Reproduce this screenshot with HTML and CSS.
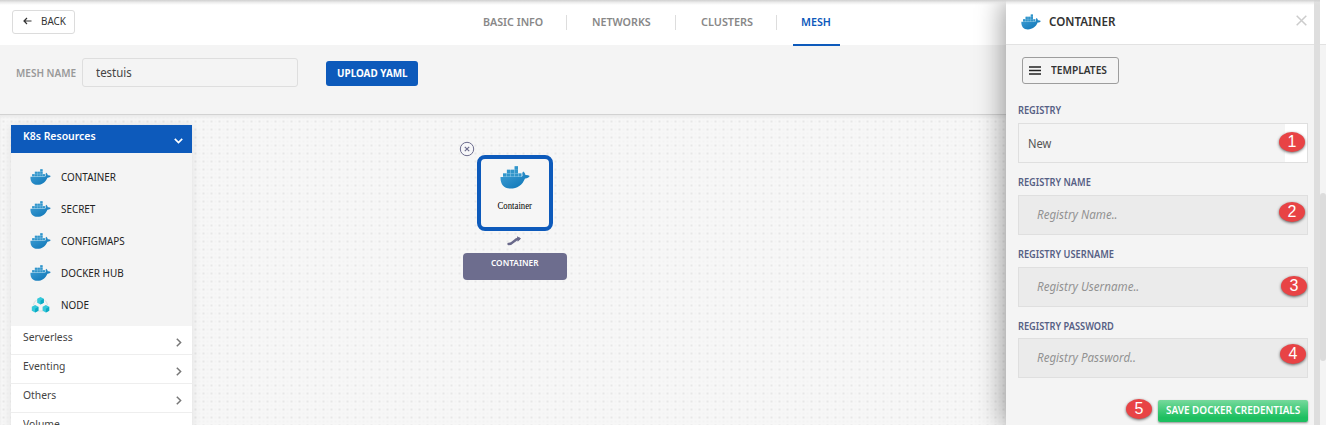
FILE: index.html
```
<!DOCTYPE html>
<html lang="en">
<head>
<meta charset="utf-8">
<title>Mesh</title>
<link rel="stylesheet" href="styles.css">
</head>
<body>
<svg class="defs" width="0" height="0">
  <defs>
    <linearGradient id="sea" x1="0" y1="0" x2="1" y2="1"><stop offset="0" stop-color="#42a0d5"/><stop offset="1" stop-color="#0871b4"/></linearGradient>
    <symbol id="whale" viewBox="0 0 30 23">
      <path fill="url(#sea)" d="M.5 11H20.5C22.3 11 22.8 9.8 22.3 8.2C22.1 7.2 22.5 6.3 23.2 5.5C24.7 6.5 25.3 7.8 25.4 9C27 8.8 28.6 9.2 29.7 10C28.9 11.7 27 12.5 25 12.4C22.3 19 17.2 22.6 10.4 22.6C3.7 22.6.3 18.2.5 11Z"/>
      <path fill="#8cc6e6" d="M3 7.2h18.500V11H3zM6.900 3.800H18v4H6.900zM14.500.300H18v4h-3.500z"/>
      <path fill="#3295ca" d="M3 7.4h3.3v3.2H3zM6.9 7.4h3.3v3.2H6.9zM10.8 7.4h3.3v3.2h-3.3zM14.7 7.4H18v3.2h-3.3zM18.6 7.4h2.8v3.2h-2.8zM6.9 3.8h3.3V7H6.9zM10.8 3.8h3.3V7h-3.3zM14.7 3.8H18V7h-3.3zM14.7.3H18v3.1h-3.3z"/>
    </symbol>
    <symbol id="cubes" viewBox="0 0 18 16">
      <path fill="none" stroke="#d5d5d5" stroke-width=".8" d="M5 3a7 7 0 0 0-3 5M13 3a7 7 0 0 1 3 5M6 14h6"/>
      <path fill="#35c8da" d="M9 0l3.300 1.800v3.900L9 7.500 5.700 5.700V1.800zM3.600 8l3.300 1.800v3.900l-3.300 1.800-3.300-1.800V9.800zM14.400 8l3.300 1.800v3.900l-3.300 1.800-3.300-1.800V9.800z"/>
      <path fill="#0ba9c2" d="M9 3.700l3.300-1.900v3.900L9 7.500zM3.600 11.700l3.300-1.900v3.900l-3.300 1.800zM14.400 11.700l3.300-1.900v3.900l-3.300 1.800z"/>
    </symbol>
  </defs>
</svg>

<div class="app">
  <header class="topbar">
    <button class="back"><svg width="9" height="8" viewBox="0 0 9 8"><path d="M8.500 4H1M4 1L1 4l3 3" fill="none" stroke="#333" stroke-width="1.200"/></svg><span class="tx">BACK</span></button>
    <nav class="tabs">
      <a class="tab tab-basic"><span class="tx">BASIC INFO</span></a>
      <a class="tab tab-net"><span class="tx">NETWORKS</span></a>
      <a class="tab tab-clu"><span class="tx">CLUSTERS</span></a>
      <a class="tab tab-mesh active"><span class="tx">MESH</span></a>
    </nav>
  </header>
  <section class="toolbar">
    <label class="mesh-label"><span class="tx">MESH NAME</span></label>
    <div class="mesh-input"><span class="tx">testuis</span></div>
    <button class="upload"><span class="tx">UPLOAD YAML</span></button>
  </section>
  <main class="canvas">
    <aside class="sidebar">
      <div class="group-head"><span class="tx">K8s Resources</span><svg width="9" height="6" viewBox="0 0 9 6"><path d="M.8.8l3.700 3.700L8.200.8" fill="none" stroke="#fff" stroke-width="1.700"/></svg></div>
      <ul class="items">
        <li><svg class="ico"><use href="#whale"/></svg><span class="tx">CONTAINER</span></li>
        <li><svg class="ico"><use href="#whale"/></svg><span class="tx">SECRET</span></li>
        <li><svg class="ico"><use href="#whale"/></svg><span class="tx">CONFIGMAPS</span></li>
        <li><svg class="ico"><use href="#whale"/></svg><span class="tx">DOCKER HUB</span></li>
        <li><svg class="ico"><use href="#cubes"/></svg><span class="tx">NODE</span></li>
      </ul>
      <div class="group"><span class="tx">Serverless</span><svg width="6" height="9" viewBox="0 0 6 9"><path d="M.8.8l3.800 3.700L.8 8.200" fill="none" stroke="#777" stroke-width="1.500"/></svg></div>
      <div class="group"><span class="tx">Eventing</span><svg width="6" height="9" viewBox="0 0 6 9"><path d="M.8.8l3.800 3.700L.8 8.200" fill="none" stroke="#777" stroke-width="1.500"/></svg></div>
      <div class="group"><span class="tx">Others</span><svg width="6" height="9" viewBox="0 0 6 9"><path d="M.8.8l3.800 3.700L.8 8.200" fill="none" stroke="#777" stroke-width="1.500"/></svg></div>
      <div class="group"><span class="tx">Volume</span></div>
    </aside>
    <svg class="node-close" width="16" height="16" viewBox="0 0 16 16"><circle cx="8" cy="8" r="6.700" fill="#f7f7f9" stroke="#6d6d8e"/><path d="M5.800 5.800l4.400 4.400M10.200 5.800l-4.400 4.400" stroke="#6d6d8e" stroke-width="1.200"/></svg>
    <div class="node"><svg class="node-ico"><use href="#whale"/></svg><span class="node-name">Container</span></div>
    <svg class="node-link" width="15" height="10" viewBox="0 0 15 10"><path d="M1.500 8C6.500 8.400 6.500 3 12 2.800" fill="none" stroke="#68688a" stroke-width="2.400" stroke-linecap="round"/><path d="M10 .2l4 2.300-3.300 3.200z" fill="#68688a"/></svg>
    <div class="node-tag"><span class="tx">CONTAINER</span></div>
  </main>
</div>

<aside class="panel">
  <div class="panel-head"><svg class="head-ico"><use href="#whale"/></svg><span class="tx">CONTAINER</span><svg class="close" width="11" height="11" viewBox="0 0 11 11"><path d="M.7.7l9.600 9.600M10.300.7L.7 10.300" stroke="#ccc" stroke-width="1.500"/></svg></div>
  <div class="panel-body">
    <button class="templates"><svg width="12" height="9" viewBox="0 0 12 9"><path d="M0 1h12M0 4.500h12M0 8h12" stroke="#222" stroke-width="1.300"/></svg><span class="tx">TEMPLATES</span></button>
    <div class="field"><label><span class="tx">REGISTRY</span></label><div class="select"><span class="tx">New</span></div><i class="badge b1">1</i></div>
    <div class="field"><label><span class="tx">REGISTRY NAME</span></label><div class="input"><span class="tx">Registry Name..</span></div><i class="badge b2">2</i></div>
    <div class="field"><label><span class="tx">REGISTRY USERNAME</span></label><div class="input"><span class="tx">Registry Username..</span></div><i class="badge b3">3</i></div>
    <div class="field last"><label><span class="tx">REGISTRY PASSWORD</span></label><div class="input"><span class="tx">Registry Password..</span></div><i class="badge b4">4</i></div>
    <div class="actions"><i class="badge b5">5</i><button class="save"><span class="tx">SAVE DOCKER CREDENTIALS</span></button></div>
  </div>
</aside>
<div class="edge"><div class="thumb"></div></div>
<div class="top-shade"></div>
</body>
</html>
```
FILE: styles.css
```
* { box-sizing: border-box; }
body { margin: 0; width: 1326px; height: 425px; overflow: hidden; position: relative; display: flex; font-family: "Noto Sans", sans-serif; font-size: 11px; color: #333; background: #fff; }
button { font: inherit; color: inherit; padding: 0; margin: 0; display: flex; align-items: center; }
svg { display: block; flex: none; }
.defs { position: absolute; }
.tx { display: inline-block; white-space: nowrap; transform: scaleX(var(--sx, .88)); transform-origin: 0 50%; line-height: 16px; }
.app { width: 1006px; height: 425px; display: flex; flex-direction: column; flex: none; }

.topbar { height: 45px; flex: none; display: flex; background: #fff; padding-left: 12px; }
.back { --sx: .9; width: 63px; height: 24px; margin-top: 10px; border: 1px solid #dcdcdc; border-radius: 3px; background: #fff; padding: 0 0 2px 10px; gap: 9px; }
.tabs { --sx: .93; display: flex; margin-left: 383px; font-size: 11.500px; font-weight: 600; color: #888; }
.tab { position: relative; height: 46px; padding: 14px 0 0 25px; }
.tab-basic { width: 109px; }
.tab-net { width: 109px; }
.tab-clu { width: 101px; --sx: .945; }
.tab-basic, .tab-net, .tab-clu { background: linear-gradient(#ddd, #ddd) no-repeat right 15px / 1px 15px; }
.tab-mesh { width: 47px; margin-left: 16px; padding-left: 8px; color: #0d5abb; border-bottom: 2px solid #0d5abb; }

.toolbar { height: 70px; flex: none; display: flex; align-items: flex-start; padding: 13px 0 0 16px; background: #f4f4f4; border-bottom: 1px solid #d2d2d2; }
.mesh-label { --sx: .91; width: 66px; padding-top: 7px; font-weight: 600; color: #999; }
.mesh-input { width: 216px; height: 29px; border: 1px solid #dedede; border-radius: 3px; padding: 4px 0 0 13px; font-size: 13px; color: #444; }
.upload { --sx: .9; margin: 3px 0 0 28px; width: 92px; height: 25px; border: 0; border-radius: 3px; background: #0d5abb; color: #fff; font-weight: 700; padding: 0 0 2px 11px; }

.canvas { position: relative; flex: 1; padding: 10px 0 0 11px; background-color: #f7f7f7; background-image: radial-gradient(circle, #cdcdcd .5px, transparent .8px), radial-gradient(circle, #efefef .5px, transparent .9px); background-size: 8px 8px, 4px 4px; background-position: 7.500px 2.500px, 1.500px .5px; box-shadow: inset 0 2px 3px #e9e9e9; }
.sidebar { width: 181px; box-shadow: 0 0 9px rgba(0,0,0,.10); font-size: 11.500px; --sx: .9; }
.group-head { --sx: .91; height: 28px; background: #0d5abb; color: #fff; font-weight: 600; display: flex; justify-content: space-between; padding: 3px 9px 0 12px; }
.group-head svg { margin-top: 10px; }
.items { list-style: none; margin: 0; padding: 8px 0 5px 19px; height: 173px; background: #f4f4f4; color: #222; font-size: 11px; }
.items li { height: 32px; display: flex; align-items: center; gap: 10px; }
.ico { width: 21px; height: 16px; }
.group { height: 29px; background: #fff; border-bottom: 1px solid #eee; display: flex; justify-content: space-between; padding: 3px 10px 0 12px; color: #444; }
.group svg { margin-top: 9px; }

.node-close { position: absolute; left: 459px; top: 26px; }
.node { position: absolute; left: 477px; top: 40px; width: 76px; height: 76px; border: 4px solid #0d5abb; border-radius: 8px; background: #f6f6f6; display: flex; flex-direction: column; align-items: center; padding-top: 7px; }
.node-ico { width: 30px; height: 23px; }
.node-name { font: 9.500px/12px "Liberation Serif", serif; color: #000; margin-top: 11px; transform: scaleX(.92); }
.node-link { position: absolute; left: 507px; top: 121px; }
.node-tag { --sx: .92; position: absolute; left: 463px; top: 138px; width: 104px; height: 27px; padding: 2px 0 0 28px; border-radius: 4px; background: #6d6d8e; color: #fff; font-size: 9px; font-weight: 600; }

.panel { position: relative; width: 308px; height: 425px; flex: none; background: #f4f4f4; box-shadow: -4px 0 24px rgba(0,0,0,.36); }
.panel-head { --sx: .965; height: 45px; background: #fff; border-bottom: 1px solid #e2e2e2; display: flex; align-items: center; padding: 0 7px 0 15px; font-size: 12px; font-weight: 600; }
.head-ico { width: 20px; height: 16px; margin-right: 8px; }
.close { margin-left: auto; margin-bottom: 3px; }
.panel-body { padding: 12px 6px 0 12px; }
.templates { --sx: .925; width: 97px; height: 27px; margin: 0 0 18px 4px; border: 1px solid #9d9d9d; border-radius: 3px; background: transparent; font-weight: 600; padding: 0 0 1px 6px; gap: 10px; }
.field { position: relative; height: 72px; }
.field.last { height: 82px; }
.field label { --sx: .925; display: block; height: 21px; color: #566084; font-size: 10px; font-weight: 600; }
.select, .input { height: 40px; border: 1px solid #dfdfdf; display: flex; align-items: center; padding-bottom: 1px; }
.select { --sx: .86; padding-left: 9px; font-size: 13px; color: #555; background: linear-gradient(#fff, #fff) no-repeat right / 22px 100%; }
.input { --sx: .965; padding-left: 18px; background: #ebebeb; font-style: italic; font-size: 12px; color: #929292; }
.last .input { margin-top: -1px; }
.badge { position: absolute; width: 26px; height: 20px; border-radius: 50%; background: #e84345; color: #fff; font: 16px/19px "Liberation Sans", sans-serif; text-align: center; box-shadow: 0 1px 3px rgba(0,0,0,.6); }
.b1 { left: 261px; top: 30px; }
.b2 { left: 261px; top: 28px; }
.b3 { left: 263px; top: 30px; }
.b4 { left: 262px; top: 26px; }
.b5 { left: 108px; top: -1px; }
.actions { position: relative; display: flex; justify-content: flex-end; }
.save { --sx: .945; width: 150px; height: 22px; border: 0; border-radius: 2px; padding: 0 0 2px 8px; color: #fff; font-size: 10.500px; font-weight: 600; background: linear-gradient(#76d99c, #1dbf60 80%); box-shadow: 0 1px 2px rgba(0,0,0,.4); }

.edge { position: relative; width: 12px; height: 425px; flex: none; border-left: 6px solid #dedede; background: linear-gradient(#fff 44px, #e2e2e2 44px, #e2e2e2 45px, #f4f4f4 45px); padding-top: 193px; }
.thumb { height: 168px; background: #dcdcdc; border-radius: 3px; }
.top-shade { position: absolute; left: 0; top: 0; width: 1320px; height: 5px; background: linear-gradient(#d0d0d0, rgba(225,225,225,.6) 50%, transparent); }
```
